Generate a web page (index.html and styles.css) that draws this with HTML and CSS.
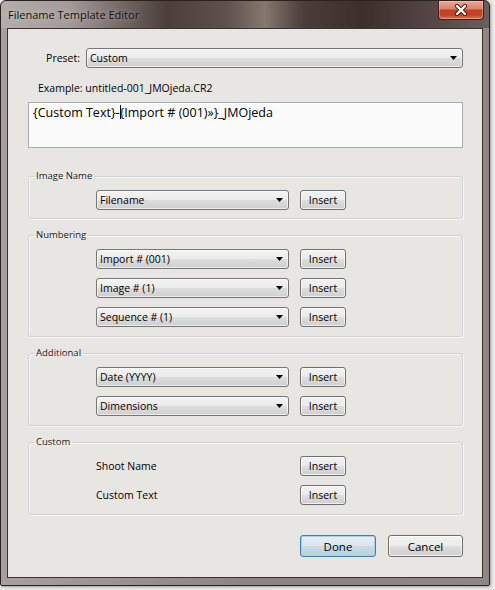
FILE: index.html
```html
<!DOCTYPE html>
<html>
<head>
<meta charset="utf-8">
<title>Filename Template Editor</title>
<link rel="stylesheet" href="styles.css">
</head>
<body>
<div class="window">
  <div class="titlebar">
    <span class="title">Filename Template Editor</span>
    <div class="close">
      <svg width="14" height="12" viewBox="0 0 14 12">
        <path d="M3 2 L11 10 M11 2 L3 10" stroke="#4a1a10" stroke-width="4.2" stroke-linecap="round"/>
        <path d="M3 2 L11 10 M11 2 L3 10" stroke="#ffffff" stroke-width="2.4" stroke-linecap="round"/>
      </svg>
    </div>
  </div>
  <div class="client">
    <div class="preset-row">
      <span class="preset-label">Preset:</span>
      <div class="select select-wide"><span>Custom</span><svg class="arrow" width="7" height="4" viewBox="0 0 7 4"><path d="M0 0 H7 L3.5 4 Z" fill="#000"/></svg></div>
    </div>
    <div class="example">Example: untitled-001_JMOjeda.CR2</div>
    <div class="template">{Custom Text}-<span class="caret"></span>{Import # (001)»}_JMOjeda</div>

    <fieldset class="group group-first">
      <legend>Image Name</legend>
      <div class="rows">
        <div class="row">
          <div class="select"><span>Filename</span><svg class="arrow" width="7" height="4" viewBox="0 0 7 4"><path d="M0 0 H7 L3.5 4 Z" fill="#000"/></svg></div>
          <button class="btn">Insert</button>
        </div>
      </div>
    </fieldset>

    <fieldset class="group">
      <legend>Numbering</legend>
      <div class="rows">
        <div class="row">
          <div class="select"><span>Import # (001)</span><svg class="arrow" width="7" height="4" viewBox="0 0 7 4"><path d="M0 0 H7 L3.5 4 Z" fill="#000"/></svg></div>
          <button class="btn">Insert</button>
        </div>
        <div class="row">
          <div class="select"><span>Image # (1)</span><svg class="arrow" width="7" height="4" viewBox="0 0 7 4"><path d="M0 0 H7 L3.5 4 Z" fill="#000"/></svg></div>
          <button class="btn">Insert</button>
        </div>
        <div class="row">
          <div class="select"><span>Sequence # (1)</span><svg class="arrow" width="7" height="4" viewBox="0 0 7 4"><path d="M0 0 H7 L3.5 4 Z" fill="#000"/></svg></div>
          <button class="btn">Insert</button>
        </div>
      </div>
    </fieldset>

    <fieldset class="group">
      <legend>Additional</legend>
      <div class="rows">
        <div class="row">
          <div class="select"><span>Date (YYYY)</span><svg class="arrow" width="7" height="4" viewBox="0 0 7 4"><path d="M0 0 H7 L3.5 4 Z" fill="#000"/></svg></div>
          <button class="btn">Insert</button>
        </div>
        <div class="row">
          <div class="select"><span>Dimensions</span><svg class="arrow" width="7" height="4" viewBox="0 0 7 4"><path d="M0 0 H7 L3.5 4 Z" fill="#000"/></svg></div>
          <button class="btn">Insert</button>
        </div>
      </div>
    </fieldset>

    <fieldset class="group">
      <legend>Custom</legend>
      <div class="rows">
        <div class="row">
          <span class="row-label">Shoot Name</span>
          <button class="btn">Insert</button>
        </div>
        <div class="row">
          <span class="row-label">Custom Text</span>
          <button class="btn">Insert</button>
        </div>
      </div>
    </fieldset>

    <div class="actions">
      <button class="btn btn-large btn-default">Done</button>
      <button class="btn btn-large">Cancel</button>
    </div>
  </div>
</div>
</body>
</html>
```

FILE: styles.css
```css
* { box-sizing: border-box; }

html, body {
  margin: 0;
  padding: 0;
}

body {
  width: 495px;
  height: 590px;
  background: #ecebea;
  font-family: "Open Sans", "Noto Sans", sans-serif;
  font-size: 10px;
  color: #000;
  overflow: hidden;
}

.window {
  width: 490px;
  height: 586px;
  border: 1px solid #2b2220;
  border-radius: 6px 6px 2px 2px;
  background:
    linear-gradient(to right, #b3adab 0%, #a39b99 14%, #6e625f 26%, #4b3e3b 34%, #5d504d 46%, #85786f 54%, #4a3d3a 62%, #3b2e2b 74%, #4f4240 86%, #6b605d 100%) top left / 100% 27px no-repeat,
    linear-gradient(to right, #a7a09e, #8d8583 50%, #8f8786);
  display: flex;
  flex-direction: column;
  box-shadow: 1px 1px 3px rgba(0,0,0,0.35);
}

.titlebar {
  height: 27px;
  flex: none;
  display: flex;
  align-items: flex-start;
  padding-left: 7px;
  padding-right: 5px;
}

.title {
  font-size: 11px;
  line-height: 14px;
  margin-top: 7px;
  color: #111;
  text-shadow: 0 0 6px rgba(255,255,255,0.55);
}

.close {
  margin-left: auto;
  width: 46px;
  height: 19px;
  border: 1px solid #4a1c14;
  border-top: none;
  border-radius: 0 0 4px 4px;
  background: linear-gradient(to bottom, #e9a99a 0%, #d8806c 45%, #c23e22 50%, #c4452a 80%, #db7a5c 100%);
  display: flex;
  align-items: center;
  justify-content: center;
  box-shadow: inset 0 0 0 1px rgba(255,220,210,0.35);
}

.client {
  flex: 1;
  margin: 0 6px 7px 6px;
  border: 1px solid #3a302e;
  background: #e8e6e3;
  padding: 0 19px 0 20px;
  display: flex;
  flex-direction: column;
}

.preset-row {
  display: flex;
  align-items: center;
  height: 20px;
  margin-top: 19px;
  gap: 6px;
}

.preset-label {
  width: 52px;
  text-align: right;
  font-size: 10.5px;
}

.select {
  height: 20px;
  width: 193px;
  border: 1px solid #767676;
  border-radius: 3px;
  background: linear-gradient(to bottom, #f3f3f3 0%, #ebebeb 48%, #dddddd 52%, #cfcfcf 100%);
  display: flex;
  align-items: center;
  padding: 0 0 0 3px;
  font-size: 10.5px;
  box-shadow: inset 0 0 0 1px rgba(255,255,255,0.6);
}

.select-wide { width: 377px; }

.select span { flex: 1; white-space: nowrap; }

.arrow {
  margin-right: 5px;
  flex: none;
}

.example {
  margin-top: 12px;
  height: 16px;
  line-height: 16px;
  padding-left: 10px;
  font-size: 10.5px;
}

.template {
  margin-top: 6px;
  height: 46px;
  border: 1px solid #a6adb6;
  background: #fbfbfb;
  padding: 2px 4px;
  font-size: 12.5px;
  line-height: 16px;
  white-space: nowrap;
}

.caret {
  display: inline-block;
  width: 1px;
  height: 14px;
  background: #000;
  vertical-align: -2px;
  margin: 0 -1px 0 0;
}

.group {
  margin: 10px 0 0 0;
  padding: 8px 0 9px 0;
  border: 1px solid #cfd3d6;
  border-radius: 3px;
  box-shadow: inset 1px 1px 0 #f6f6f6, 1px 1px 0 #f6f6f6;
  min-width: 0;
}

.group-first {
  margin-top: 22px;
  padding-bottom: 8px;
}

.group legend {
  margin-left: 5px;
  padding: 0 2px;
  font-size: 9.5px;
  line-height: 12px;
  color: #1a1a1a;
}

.rows {
  display: flex;
  flex-direction: column;
  gap: 9px;
  padding-left: 67px;
}

.row {
  display: flex;
  align-items: center;
  gap: 11px;
  height: 20px;
}

.row-label {
  width: 193px;
  font-size: 10.5px;
}

.btn {
  width: 46px;
  height: 20px;
  border: 1px solid #707070;
  border-radius: 3px;
  background: linear-gradient(to bottom, #f2f2f2 0%, #ebebeb 48%, #dddddd 52%, #cfcfcf 100%);
  box-shadow: inset 0 0 0 1px rgba(255,255,255,0.65);
  font-family: "Open Sans", "Noto Sans", sans-serif;
  font-size: 10.5px;
  color: #000;
  padding: 0;
  margin: 0;
}

.actions {
  margin-top: 20px;
  display: flex;
  justify-content: flex-end;
  gap: 12px;
}

.btn-large {
  width: 75px;
  height: 22px;
  font-size: 11.5px;
}

.btn-default {
  width: 76px;
  border-color: #3c7fb1;
  background: linear-gradient(to bottom, #e6eef3 0%, #dbe6ed 48%, #cbdbe5 52%, #bccfdb 100%);
  box-shadow: inset 0 0 0 1px #9fd6f2;
}
```
